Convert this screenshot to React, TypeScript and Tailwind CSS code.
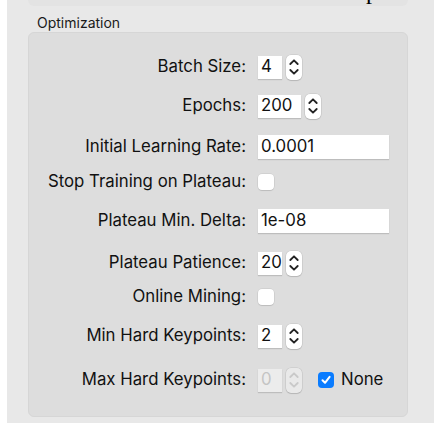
import React from 'react';

type Row =
  | { label: string; kind: 'spin'; value: string; width: number; gap: string; disabled?: boolean; extra?: boolean }
  | { label: string; kind: 'text'; value: string; gap: string }
  | { label: string; kind: 'check'; gap: string };

const rows: Row[] = [
  { label: 'Batch Size:', kind: 'spin', value: '4', width: 24, gap: 'mt-0' },
  { label: 'Epochs:', kind: 'spin', value: '200', width: 43, gap: 'mt-[15px]' },
  { label: 'Initial Learning Rate:', kind: 'text', value: '0.0001', gap: 'mt-[17px]' },
  { label: 'Stop Training on Plateau:', kind: 'check', gap: 'mt-[11px]' },
  { label: 'Plateau Min. Delta:', kind: 'text', value: '1e-08', gap: 'mt-[15px]' },
  { label: 'Plateau Patience:', kind: 'spin', value: '20', width: 24, gap: 'mt-[18px]' },
  { label: 'Online Mining:', kind: 'check', gap: 'mt-[10px]' },
  { label: 'Min Hard Keypoints:', kind: 'spin', value: '2', width: 24, gap: 'mt-[15px]' },
  { label: 'Max Hard Keypoints:', kind: 'spin', value: '0', width: 24, gap: 'mt-[20px]', disabled: true, extra: true },
];

const Stepper: React.FC<{ disabled?: boolean }> = ({ disabled }) => (
  <div
    className={`ml-[4px] flex h-[25px] w-[16px] flex-col items-center justify-center rounded-[5px] shadow-[0_0_0_0.5px_rgba(0,0,0,0.12),0_1px_1px_rgba(0,0,0,0.12)] ${
      disabled ? 'bg-[#e9e9e9]' : 'bg-white'
    }`}
  >
    <svg width="12" height="24" viewBox="0 0 12 24" fill="none">
      <g stroke={disabled ? '#c9c9c9' : '#222'} strokeWidth="1.8" strokeLinecap="round" strokeLinejoin="round">
        <path d="M2.3 9 L6 5.3 L9.7 9" />
        <path d="M2.3 15 L6 18.7 L9.7 15" />
      </g>
    </svg>
  </div>
);

const Field: React.FC<{ value: string; width: number; disabled?: boolean }> = ({ value, width, disabled }) => (
  <div
    className={`flex h-[23px] items-center pl-[3px] text-[16.8px] shadow-[0_1px_1px_rgba(0,0,0,0.14)] ${
      disabled ? 'bg-[#ececec] text-[#c4c4c4]' : 'bg-white text-[#111]'
    }`}
    style={{ width }}
  >
    {value}
  </div>
);

const Check: React.FC<{ checked?: boolean }> = ({ checked }) =>
  checked ? (
    <div className="flex h-[16px] w-[16px] items-center justify-center rounded-[4px] bg-[#0a7cff]">
      <svg width="12" height="12" viewBox="0 0 12 12" fill="none">
        <path d="M2.5 6.3 L5 8.8 L9.6 2.8" stroke="white" strokeWidth="2" strokeLinecap="round" strokeLinejoin="round" />
      </svg>
    </div>
  ) : (
    <div className="h-[16px] w-[16px] rounded-[4px] bg-white shadow-[0_0_0_0.5px_rgba(0,0,0,0.1),0_1px_1px_rgba(0,0,0,0.1)]" />
  );

export default function App() {
  return (
    <div
      className="relative h-[423px] w-[434px] overflow-hidden bg-white text-[#111]"
      style={{ fontFamily: 'Inter, "Noto Sans", sans-serif' }}
    >
      <div className="ml-[7px] flex h-full flex-col bg-[#e8e8e8] pl-[21px] pr-[26px]">
        {/* bottom edge of the group box above */}
        <div className="h-[6px] rounded-b-[6px] bg-[#e3e3e3]" />

        <div className="mt-[9px] pl-[9px] text-[14px] leading-[16px] text-[#1a1a1a]">Optimization</div>

        <div className="mt-[1px] flex flex-col rounded-[6px] border border-[#d6d6d6] bg-[#dddddd] pt-[22px] pb-[24px]">
          {rows.map((row, i) => (
            <div key={i} className={`flex h-[24px] items-center ${row.gap}`}>
              <div className="w-[217px] shrink-0 text-right text-[16.8px] text-[#111]">{row.label}</div>
              <div className="ml-[12px] flex items-center">
                {row.kind === 'spin' && (
                  <>
                    <Field value={row.value} width={row.width} disabled={row.disabled} />
                    <Stepper disabled={row.disabled} />
                    {row.extra && (
                      <div className="ml-[16px] flex items-center gap-[7px]">
                        <Check checked />
                        <span className="text-[16.8px]">None</span>
                      </div>
                    )}
                  </>
                )}
                {row.kind === 'text' && (
                  <div className="flex h-[24px] w-[131px] items-center bg-white pl-[3px] text-[16.8px] text-[#111] shadow-[0_1px_1px_rgba(0,0,0,0.14)]">
                    {row.value}
                  </div>
                )}
                {row.kind === 'check' && <Check />}
              </div>
            </div>
          ))}
        </div>
      </div>

      {/* descender of a letter from the page behind */}
      <span
        className="absolute left-[366px] top-[-21px] text-[24px] leading-none text-black"
        style={{ fontFamily: '"Liberation Serif", serif' }}
      >
        p
      </span>
    </div>
  );
}
